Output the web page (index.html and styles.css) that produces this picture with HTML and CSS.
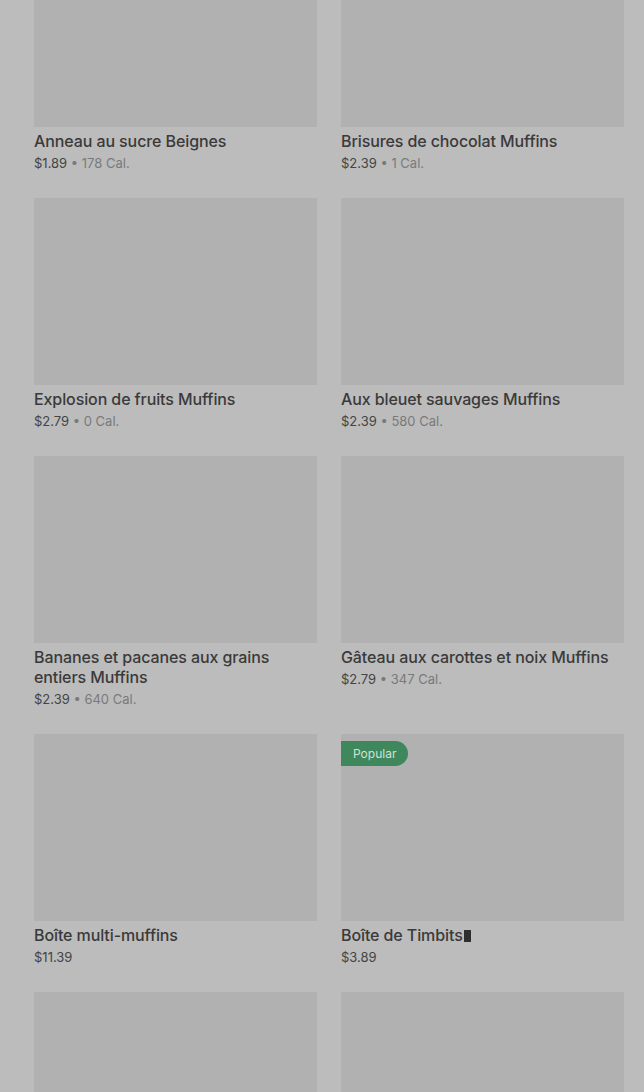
FILE: index.html
```html
<!DOCTYPE html>
<html lang="fr">
<head>
    <meta charset="UTF-8">
    <meta name="viewport" content="width=device-width, initial-scale=1.0">
    <title>Menu</title>
    <link rel="stylesheet" href="styles.css">
</head>
<body>
    <div class="menu-grid">
        <div class="item">
            <div class="item-image"></div>
            <div class="item-name">Anneau au sucre Beignes</div>
            <div class="item-meta"><span class="price">$1.89</span> • 178 Cal.</div>
        </div>
        <div class="item">
            <div class="item-image"></div>
            <div class="item-name">Brisures de chocolat Muffins</div>
            <div class="item-meta"><span class="price">$2.39</span> • 1 Cal.</div>
        </div>
        <div class="item">
            <div class="item-image"></div>
            <div class="item-name">Explosion de fruits Muffins</div>
            <div class="item-meta"><span class="price">$2.79</span> • 0 Cal.</div>
        </div>
        <div class="item">
            <div class="item-image"></div>
            <div class="item-name">Aux bleuet sauvages Muffins</div>
            <div class="item-meta"><span class="price">$2.39</span> • 580 Cal.</div>
        </div>
        <div class="item">
            <div class="item-image"></div>
            <div class="item-name">Bananes et pacanes aux grains entiers Muffins</div>
            <div class="item-meta"><span class="price">$2.39</span> • 640 Cal.</div>
        </div>
        <div class="item">
            <div class="item-image"></div>
            <div class="item-name">Gâteau aux carottes et noix Muffins</div>
            <div class="item-meta"><span class="price">$2.79</span> • 347 Cal.</div>
        </div>
        <div class="item">
            <div class="item-image"></div>
            <div class="item-name">Boîte multi-muffins</div>
            <div class="item-meta"><span class="price">$11.39</span></div>
        </div>
        <div class="item">
            <div class="item-image">
                <span class="badge">Popular</span>
            </div>
            <div class="item-name">Boîte de Timbits<span class="tofu"></span></div>
            <div class="item-meta"><span class="price">$3.89</span></div>
        </div>
        <div class="item">
            <div class="item-image"></div>
        </div>
        <div class="item">
            <div class="item-image"></div>
        </div>
    </div>
</body>
</html>
```

FILE: styles.css
```css
body {
    margin: 0;
    background-color: #bcbcbc;
    font-family: Inter, "Noto Sans", sans-serif;
    overflow: hidden;
}
.menu-grid {
    display: grid;
    grid-template-columns: 283px 283px;
    column-gap: 24px;
    row-gap: 26px;
    padding: 0 20px 0 34px;
    margin-top: -60px;
}
.item-image {
    position: relative;
    height: 187px;
    background-color: #b1b1b1;
    margin-bottom: 4px;
}
.item-name {
    font-size: 16px;
    line-height: 20px;
    font-weight: 500;
    color: #3a3a3a;
    letter-spacing: -0.1px;
}
.tofu {
    display: inline-block;
    width: 7px;
    height: 12px;
    margin-left: 1px;
    background-color: #2e2e2e;
    vertical-align: -1px;
}
.item-meta {
    margin-top: 3px;
    font-size: 13px;
    line-height: 18px;
    color: #7a7a7a;
}
.price {
    color: #444;
}
.badge {
    position: absolute;
    top: 7px;
    left: 0;
    height: 25px;
    line-height: 25px;
    padding: 0 12px;
    background-color: #3f875d;
    color: #cfe3d6;
    font-size: 12px;
    border-radius: 0 13px 13px 0;
}
```
